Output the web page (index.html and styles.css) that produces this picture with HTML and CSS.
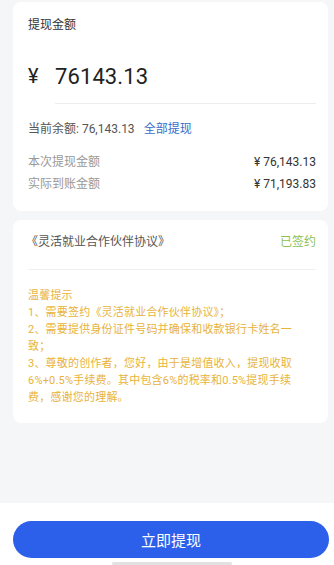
FILE: index.html
```html
<!DOCTYPE html>
<html lang="zh-CN">
<head>
<meta charset="utf-8">
<meta name="viewport" content="width=device-width, initial-scale=1">
<title>提现</title>
<link rel="stylesheet" href="styles.css">
</head>
<body>
<div class="page">
  <main class="main">
    <section class="card card-amount">
      <div class="label">提现金额</div>
      <div class="amount-row">
        <span class="yen">¥</span>
        <span class="amount">76143.13</span>
      </div>
      <div class="amount-divider"></div>
      <div class="balance">当前余额: 76,143.13<span class="all">全部提现</span></div>
      <div class="rows">
        <div class="row"><span class="row-label">本次提现金额</span><span class="row-value">¥ 76,143.13</span></div>
        <div class="row"><span class="row-label">实际到账金额</span><span class="row-value">¥ 71,193.83</span></div>
      </div>
    </section>
    <section class="card card-agree">
      <div class="agree-row">
        <span class="agree-title">《灵活就业合作伙伴协议》</span>
        <span class="agree-status">已签约</span>
      </div>
      <div class="agree-divider"></div>
      <div class="tips">
        <p>温馨提示</p>
        <p>1、需要签约《灵活就业合作伙伴协议》；</p>
        <p>2、需要提供身份证件号码并确保和收款银行卡姓名一致；</p>
        <p>3、尊敬的创作者，您好，由于是增值收入，提现收取6%+0.5%手续费。其中包含6%的税率和0.5%提现手续费，感谢您的理解。</p>
      </div>
    </section>
  </main>
  <footer class="footer">
    <button class="submit" type="button">立即提现</button>
    <div class="home-bar"></div>
  </footer>
</div>
</body>
</html>
```
FILE: styles.css
```css
* { box-sizing: border-box; }
html, body { margin: 0; padding: 0; }
body {
  background: #f5f6f8;
  font-family: Roboto, "Noto Sans CJK SC", sans-serif;
  color: #333;
}
.page {
  height: 565px;
  display: flex;
  flex-direction: column;
  overflow: hidden;
}
.main {
  flex: 1;
  padding-top: 2px;
}
.card {
  background: #fff;
  border-radius: 8px;
  margin-left: 13px;
  width: 315px;
  padding-left: 15px;
  padding-right: 12px;
}
.card-amount {
  padding-top: 15px;
  padding-bottom: 18px;
}
.label {
  font-size: 12px;
  line-height: 17px;
  color: #333;
}
.amount-row {
  margin-top: 27px;
  height: 30px;
  display: flex;
  align-items: center;
  color: #222;
}
.yen {
  font-size: 20px;
  width: 27px;
}
.amount {
  font-size: 22px;
  letter-spacing: 0.1px;
}
.amount-divider {
  margin-top: 12px;
  margin-left: 27px;
  height: 1px;
  background: #eeeeee;
}
.balance {
  margin-top: 17px;
  font-size: 12px;
  line-height: 17px;
  color: #555;
}
.all {
  color: #3a6cc8;
  margin-left: 9px;
}
.rows {
  margin-top: 16px;
  display: flex;
  flex-direction: column;
  gap: 5px;
}
.row {
  display: flex;
  justify-content: space-between;
  font-size: 12px;
  line-height: 17px;
}
.row-label { color: #999; }
.row-value { color: #333; }
.card-agree {
  margin-top: 9px;
  padding-top: 14px;
  padding-bottom: 17px;
}
.agree-row {
  display: flex;
  justify-content: space-between;
  font-size: 12px;
  line-height: 17px;
}
.agree-title { color: #555; margin-left: -2px; }
.agree-status { color: #8cc152; }
.agree-divider {
  margin-top: 18px;
  height: 1px;
  background: #f0f0f0;
}
.tips {
  margin-top: 17px;
  width: 276px;
  font-size: 11px;
  letter-spacing: 0.2px;
  line-height: 17px;
  color: #e8b33a;
}
.tips p { margin: 0; }
.footer {
  height: 62px;
  background: #fff;
  padding-top: 18px;
  display: flex;
  flex-direction: column;
}
.submit {
  margin-left: 13px;
  width: 316px;
  height: 37px;
  border: none;
  border-radius: 19px;
  background: #2c60ea;
  color: #fff;
  font-family: "Noto Sans CJK SC", sans-serif;
  font-size: 15px;
  padding: 0;
}
.home-bar {
  margin-top: 4px;
  margin-left: 112px;
  width: 120px;
  height: 3px;
  background: #e2e2e2;
  border-radius: 2px;
}
```
